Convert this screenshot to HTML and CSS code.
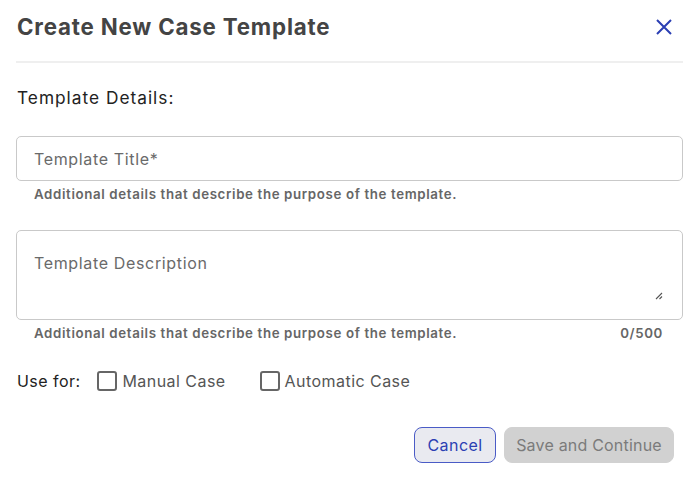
FILE: index.html
```html
<!DOCTYPE html>
<html lang="en">
<head>
<meta charset="utf-8">
<title>Create New Case Template</title>
<link rel="stylesheet" href="styles.css">
</head>
<body>
<div class="dialog">
  <div class="header">
    <h1 class="title">Create New Case Template</h1>
    <button class="close" aria-label="Close">
      <svg width="16" height="16" viewBox="0 0 16 16"><path d="M1 1L15 15M15 1L1 15" stroke="#2b3fb3" stroke-width="2" fill="none"/></svg>
    </button>
  </div>
  <div class="divider"></div>
  <h2 class="section">Template Details:</h2>
  <div class="field">
    <div class="input">Template Title*</div>
    <div class="helper"><span>Additional details that describe the purpose of the template.</span></div>
  </div>
  <div class="field field-area">
    <div class="textarea">
      <span>Template Description</span>
      <svg class="grip" width="8" height="8" viewBox="0 0 8 8"><path d="M7 1L1 7M7 4.5L4.5 7" stroke="#555" stroke-width="1.1" fill="none"/></svg>
    </div>
    <div class="helper"><span>Additional details that describe the purpose of the template.</span><span class="count">0/500</span></div>
  </div>
  <div class="usefor">
    <span class="usefor-label">Use for:</span>
    <label class="check"><span class="box"></span>Manual Case</label>
    <label class="check"><span class="box"></span>Automatic Case</label>
  </div>
  <div class="actions">
    <button class="btn btn-cancel">Cancel</button>
    <button class="btn btn-save">Save and Continue</button>
  </div>
</div>
</body>
</html>
```
FILE: styles.css
```css
* { box-sizing: border-box; }
html, body { margin: 0; padding: 0; background: #fff; }
body { font-family: Inter, "Noto Sans", sans-serif; color: #222; }
.dialog { width: 699px; padding: 0 16px 0 16px; }
.header { height: 52px; display: flex; align-items: center; justify-content: space-between; padding-left: 1px; }
.title { margin: 0; font-size: 22.3px; font-weight: 700; color: #444; letter-spacing: 0.82px; }
.close { border: 0; background: none; padding: 0; width: 16px; height: 16px; margin-right: 11px; margin-top: 1px; display: flex; }
.divider { height: 2px; background: #efefef; margin-top: 9px; }
.section { margin: 24px 0 0 1px; font-size: 17.3px; font-weight: 400; color: #222; line-height: 22px; letter-spacing: 1px; }
.field { margin-top: 27px; }
.field-area { margin-top: 28px; }
.input { height: 45px; border: 1px solid #c9c9c9; border-radius: 5px; padding: 0 17px; display: flex; align-items: center; font-size: 16px; color: #6a6a6a; letter-spacing: 0.65px; }
.textarea { position: relative; height: 90px; border: 1px solid #c9c9c9; border-radius: 5px; padding: 21px 17px 0; font-size: 16px; line-height: 22px; color: #6a6a6a; letter-spacing: 0.65px; }
.grip { position: absolute; right: 19px; bottom: 19px; }
.helper { display: flex; justify-content: space-between; padding: 0 20px 0 18px; margin-top: 5px; font-size: 13.3px; font-weight: 600; color: #666; line-height: 16px; letter-spacing: 0.63px; }
.usefor { display: flex; align-items: center; margin-top: 30px; padding-left: 1px; font-size: 16px; color: #222; letter-spacing: 0.45px; }
.usefor-label { margin-right: 17px; }
.check { display: flex; align-items: center; color: #555; margin-right: 34px; }
.box { width: 20px; height: 20px; border: 2px solid #666; border-radius: 3px; margin-right: 5px; }
.actions { display: flex; justify-content: flex-end; gap: 8px; margin-top: 36px; padding-right: 9px; }
.btn { height: 36px; border-radius: 8px; font-family: Inter, "Noto Sans", sans-serif; font-size: 16px; padding: 0; white-space: nowrap; letter-spacing: 0.2px; }
.btn-cancel { width: 82px; background: #e9eaf0; border: 1px solid #4a5bc6; color: #2b3fb3; letter-spacing: 0.45px; }
.btn-save { width: 170px; background: #d1d1d1; border: 1px solid #d1d1d1; color: #7b7b7b; }
```
